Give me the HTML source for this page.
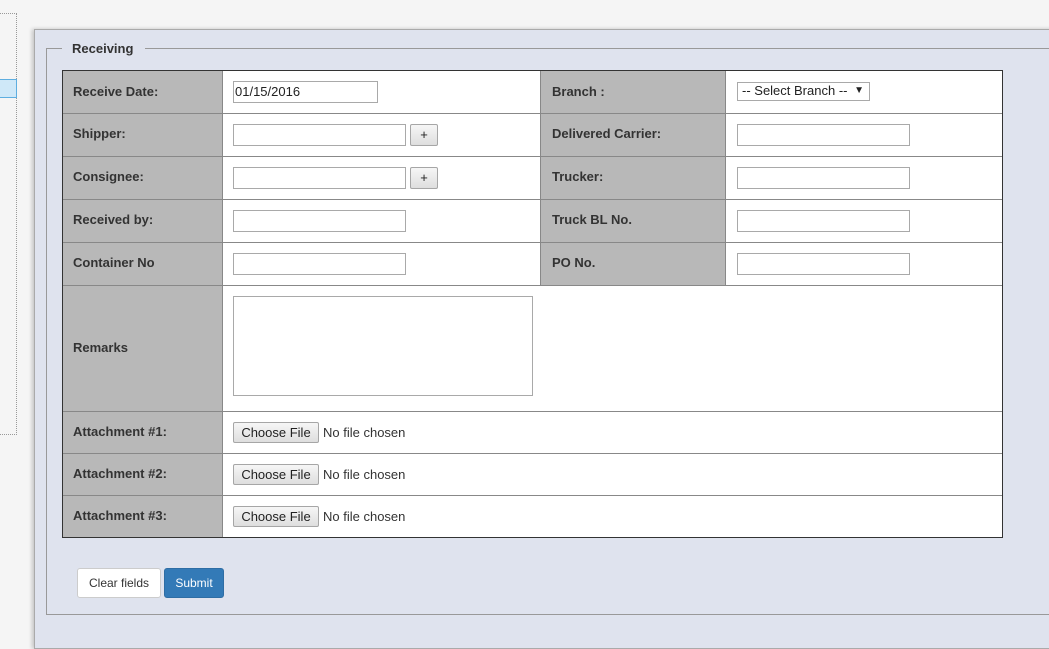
<!DOCTYPE html>
<html><head><style>
*{box-sizing:border-box}
body{margin:0;width:1049px;height:639px;background:#f5f5f5;font-family:"Liberation Sans",Arial,sans-serif;position:relative;overflow:hidden}
.a{position:absolute}
.lbl{position:absolute;font-size:13px;font-weight:bold;color:#333}
.inp{position:absolute;height:22px;background:#fff;border:1px solid #a9a9a9}
.hl{position:absolute;height:1px;background:#888}
.btn{position:absolute;background:linear-gradient(#f6f6f6,#dedede);border:1px solid #a6a6a6;border-radius:2px;font-size:13px;color:#222;text-align:center}
.nf{position:absolute;font-size:13px;color:#333}
</style></head><body>
<div class="a" style="left:-1px;top:13px;width:18px;height:422px;border:1px dotted #999"></div>
<div class="a" style="left:-1px;top:79px;width:18px;height:19px;background:#cfe8f8;border:1px solid #5eaee0"></div>

<div class="a" style="left:34px;top:29px;width:1030px;height:620px;background:#dfe3ee;border:1px solid #aaa;box-shadow:-2px 0 4px rgba(0,0,0,.2)"></div>
<div class="a" style="left:46px;top:48px;width:1020px;height:567px;border:1px solid #999"></div>
<div class="a" style="left:62px;top:40px;width:83px;height:18px;background:#dfe3ee;font-size:13px;font-weight:bold;color:#333;padding-left:10px;line-height:18px">Receiving</div>

<div class="a" style="left:62px;top:70px;width:941px;height:468px;background:#fff;border:1px solid #333"></div>
<div class="a" style="left:63px;top:71px;width:159px;height:466px;background:#b8b8b8"></div>
<div class="a" style="left:222px;top:71px;width:1px;height:466px;background:#888"></div>
<div class="a" style="left:540px;top:71px;width:186px;height:214px;background:#b8b8b8;border-left:1px solid #888;border-right:1px solid #888"></div>
<div class="hl" style="left:63px;top:113px;width:939px"></div>
<div class="hl" style="left:63px;top:156px;width:939px"></div>
<div class="hl" style="left:63px;top:199px;width:939px"></div>
<div class="hl" style="left:63px;top:242px;width:939px"></div>
<div class="hl" style="left:63px;top:285px;width:939px"></div>
<div class="hl" style="left:63px;top:411px;width:939px"></div>
<div class="hl" style="left:63px;top:453px;width:939px"></div>
<div class="hl" style="left:63px;top:495px;width:939px"></div>

<div class="lbl" style="left:73px;top:84px">Receive Date:</div>
<div class="lbl" style="left:73px;top:126px">Shipper:</div>
<div class="lbl" style="left:73px;top:169px">Consignee:</div>
<div class="lbl" style="left:73px;top:212px">Received by:</div>
<div class="lbl" style="left:73px;top:255px">Container No</div>
<div class="lbl" style="left:73px;top:340px">Remarks</div>
<div class="lbl" style="left:73px;top:424px">Attachment #1:</div>
<div class="lbl" style="left:73px;top:466px">Attachment #2:</div>
<div class="lbl" style="left:73px;top:508px">Attachment #3:</div>
<div class="lbl" style="left:552px;top:84px">Branch :</div>
<div class="lbl" style="left:552px;top:126px">Delivered Carrier:</div>
<div class="lbl" style="left:552px;top:169px">Trucker:</div>
<div class="lbl" style="left:552px;top:212px">Truck BL No.</div>
<div class="lbl" style="left:552px;top:255px">PO No.</div>

<div class="inp" style="left:233px;top:81px;width:145px;font-size:13px;padding-left:1px;line-height:19px;color:#222">01/15/2016</div>
<div class="inp" style="left:233px;top:124px;width:173px"></div>
<div class="btn" style="left:410px;top:124px;width:28px;height:22px;line-height:19px">+</div>
<div class="inp" style="left:233px;top:167px;width:173px"></div>
<div class="btn" style="left:410px;top:167px;width:28px;height:22px;line-height:19px">+</div>
<div class="inp" style="left:233px;top:210px;width:173px"></div>
<div class="inp" style="left:233px;top:253px;width:173px"></div>
<div class="inp" style="left:233px;top:296px;width:300px;height:100px"></div>

<div class="a" style="left:737px;top:82px;width:133px;height:19px;background:#fff;border:1px solid #a9a9a9;font-size:13px;color:#222;line-height:16px;padding-left:4px">-- Select Branch --<span style="position:absolute;right:5px;font-size:10px">▼</span></div>
<div class="inp" style="left:737px;top:124px;width:173px"></div>
<div class="inp" style="left:737px;top:167px;width:173px"></div>
<div class="inp" style="left:737px;top:210px;width:173px"></div>
<div class="inp" style="left:737px;top:253px;width:173px"></div>

<div class="btn" style="left:233px;top:422px;width:86px;height:21px;line-height:19px">Choose File</div><div class="nf" style="left:323px;top:425px">No file chosen</div>
<div class="btn" style="left:233px;top:464px;width:86px;height:21px;line-height:19px">Choose File</div><div class="nf" style="left:323px;top:467px">No file chosen</div>
<div class="btn" style="left:233px;top:506px;width:86px;height:21px;line-height:19px">Choose File</div><div class="nf" style="left:323px;top:509px">No file chosen</div>

<div class="a" style="left:77px;top:568px;width:84px;height:30px;background:#fff;border:1px solid #ccc;border-radius:3px;font-size:12px;color:#333;text-align:center;line-height:28px">Clear fields</div>
<div class="a" style="left:164px;top:568px;width:60px;height:30px;background:#337ab7;border:1px solid #2e6da4;border-radius:3px;font-size:12px;color:#fff;text-align:center;line-height:28px">Submit</div>
</body></html>
